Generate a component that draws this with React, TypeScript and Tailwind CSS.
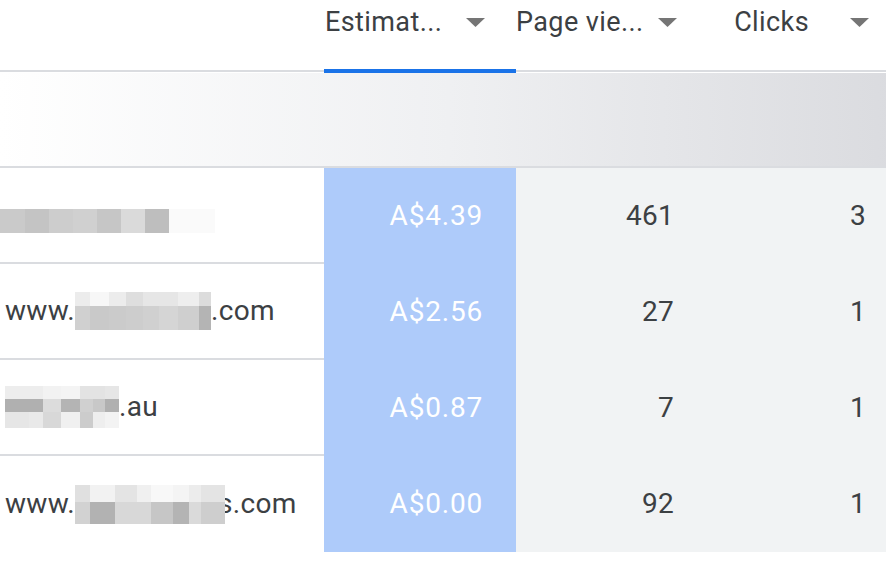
import React from "react";

type Cell = { w: string; c: string };
type Mosaic = { rows: { h: string; cells: Cell[] }[]; cls?: string };

const m1: Mosaic = {
  cls: "mt-[11px]",
  rows: [
    {
      h: "h-[24px]",
      cells: [
        { w: "w-[25px]", c: "bg-[#cacaca]" },
        { w: "w-[24px]", c: "bg-[#c4c4c4]" },
        { w: "w-[24px]", c: "bg-[#cdcdcd]" },
        { w: "w-[24px]", c: "bg-[#d0d0d0]" },
        { w: "w-[24px]", c: "bg-[#c6c6c6]" },
        { w: "w-[24px]", c: "bg-[#dadada]" },
        { w: "w-[24px]", c: "bg-[#bebebe]" },
        { w: "w-[46px]", c: "bg-[#fafafa]" },
      ],
    },
  ],
};

const m2: Mosaic = {
  rows: [
    {
      h: "h-[14px]",
      cells: [
        { w: "w-[15px]", c: "bg-[#ececec]" },
        { w: "w-[19px]", c: "bg-[#f7f7f7]" },
        { w: "w-[17px]", c: "bg-[#ececec]" },
        { w: "w-[17px]", c: "bg-[#dedede]" },
        { w: "w-[16px]", c: "bg-[#e6e6e6]" },
        { w: "w-[19px]", c: "bg-[#e6e6e6]" },
        { w: "w-[21px]", c: "bg-[#eeeeee]" },
        { w: "w-[12px]", c: "bg-[#dcdcdc]" },
      ],
    },
    {
      h: "h-[24px]",
      cells: [
        { w: "w-[15px]", c: "bg-[#d0d0d0]" },
        { w: "w-[19px]", c: "bg-[#c9c9c9]" },
        { w: "w-[17px]", c: "bg-[#cbcbcb]" },
        { w: "w-[17px]", c: "bg-[#cdcdcd]" },
        { w: "w-[16px]", c: "bg-[#d0d0d0]" },
        { w: "w-[19px]", c: "bg-[#d5d5d5]" },
        { w: "w-[21px]", c: "bg-[#cfcfcf]" },
        { w: "w-[12px]", c: "bg-[#b4b4b4]" },
      ],
    },
  ],
};

const m3: Mosaic = {
  rows: [
    {
      h: "h-[13px]",
      cells: [
        { w: "w-[24px]", c: "bg-[#ededed]" },
        { w: "w-[14px]", c: "bg-[#ededed]" },
        { w: "w-[18px]", c: "bg-[#f2f2f2]" },
        { w: "w-[19px]", c: "bg-[#f4f4f4]" },
        { w: "w-[13px]", c: "bg-[#e3e3e3]" },
        { w: "w-[12px]", c: "bg-[#e3e3e3]" },
        { w: "w-[14px]", c: "bg-[#e6e6e6]" },
      ],
    },
    {
      h: "h-[13px]",
      cells: [
        { w: "w-[24px]", c: "bg-[#b0b0b0]" },
        { w: "w-[14px]", c: "bg-[#b0b0b0]" },
        { w: "w-[18px]", c: "bg-[#dcdcdc]" },
        { w: "w-[19px]", c: "bg-[#b4b4b4]" },
        { w: "w-[13px]", c: "bg-[#d0d0d0]" },
        { w: "w-[12px]", c: "bg-[#c8c8c8]" },
        { w: "w-[14px]", c: "bg-[#b0b0b0]" },
      ],
    },
    {
      h: "h-[16px]",
      cells: [
        { w: "w-[24px]", c: "bg-[#e6e6e6]" },
        { w: "w-[14px]", c: "bg-[#e9e9e9]" },
        { w: "w-[18px]", c: "bg-[#d8d8d8]" },
        { w: "w-[19px]", c: "bg-[#f0f0f0]" },
        { w: "w-[13px]", c: "bg-[#cccccc]" },
        { w: "w-[12px]", c: "bg-[#eeeeee]" },
        { w: "w-[14px]", c: "bg-[#f3f3f3]" },
      ],
    },
  ],
};

const m4: Mosaic = {
  cls: "relative z-10",
  rows: [
    {
      h: "h-[17px]",
      cells: [
        { w: "w-[15px]", c: "bg-[#e0e0e0]" },
        { w: "w-[25px]", c: "bg-[#f2f2f2]" },
        { w: "w-[22px]", c: "bg-[#e4e4e4]" },
        { w: "w-[14px]", c: "bg-[#f0f0f0]" },
        { w: "w-[22px]", c: "bg-[#f8f8f8]" },
        { w: "w-[16px]", c: "bg-[#f4f4f4]" },
        { w: "w-[12px]", c: "bg-[#ececec]" },
        { w: "w-[24px]", c: "bg-[#e4e4e4]" },
      ],
    },
    {
      h: "h-[22px]",
      cells: [
        { w: "w-[15px]", c: "bg-[#d2d2d2]" },
        { w: "w-[25px]", c: "bg-[#b2b2b2]" },
        { w: "w-[22px]", c: "bg-[#d8d8d8]" },
        { w: "w-[14px]", c: "bg-[#d8d8d8]" },
        { w: "w-[22px]", c: "bg-[#c6c6c6]" },
        { w: "w-[16px]", c: "bg-[#b4b4b4]" },
        { w: "w-[12px]", c: "bg-[#dadada]" },
        { w: "w-[24px]", c: "bg-[#cecece]" },
      ],
    },
  ],
};

function MosaicBlock({ m }: { m: Mosaic }) {
  return (
    <span className={`inline-flex flex-col shrink-0 ${m.cls ?? ""}`}>
      {m.rows.map((r, i) => (
        <span key={i} className={`flex ${r.h}`}>
          {r.cells.map((c, j) => (
            <span key={j} className={`block h-full ${c.w} ${c.c}`} />
          ))}
        </span>
      ))}
    </span>
  );
}

function Caret() {
  return (
    <svg width="19" height="9" viewBox="0 0 19 9" className="shrink-0 block">
      <polygon points="0,0 19,0 9.5,9" fill="#757575" />
    </svg>
  );
}

const rows = [
  {
    site: <MosaicBlock m={m1} />,
    pad: "pl-0",
    est: "A$4.39",
    pv: "461",
    clicks: "3",
  },
  {
    site: (
      <>
        <span>www.</span>
        <MosaicBlock m={m2} />
        <span>.com</span>
      </>
    ),
    pad: "pl-[5px]",
    est: "A$2.56",
    pv: "27",
    clicks: "1",
  },
  {
    site: (
      <>
        <MosaicBlock m={m3} />
        <span>.au</span>
      </>
    ),
    pad: "pl-[5px]",
    est: "A$0.87",
    pv: "7",
    clicks: "1",
  },
  {
    site: (
      <>
        <span>www.</span>
        <MosaicBlock m={m4} />
        <span className="-ml-[7px]">s.com</span>
      </>
    ),
    pad: "pl-[5px]",
    est: "A$0.00",
    pv: "92",
    clicks: "1",
  },
];

export default function App() {
  return (
    <div
      className="w-[886px] h-[564px] overflow-hidden bg-white text-[#3c4043] leading-none"
      style={{ fontFamily: "Roboto, 'Liberation Sans', sans-serif" }}
    >
      <div className="w-[900px]">
        {/* Header */}
        <div className="grid grid-cols-[324px_192px_192px_192px] h-[70px] text-[27px] tracking-[0.4px]">
          <div />
          <div className="flex items-start pt-[9px] pl-[1px]">
            <span className="w-[141px] whitespace-nowrap">Estimat...</span>
            <span className="mt-[9px]">
              <Caret />
            </span>
          </div>
          <div className="flex items-start pt-[9px]">
            <span className="w-[142px] whitespace-nowrap">Page vie...</span>
            <span className="mt-[9px]">
              <Caret />
            </span>
          </div>
          <div className="flex items-start pt-[9px]">
            <span className="w-[142px] whitespace-nowrap text-right pr-[41px]">Clicks</span>
            <span className="mt-[9px]">
              <Caret />
            </span>
          </div>
        </div>
        {/* Header bottom border + blue indicator */}
        <div className="grid grid-cols-[324px_192px_384px] h-[3px]">
          <div className="bg-[#dadce0] h-[2px]" />
          <div className="bg-[#1a73e8] h-[4px] -mt-[1px]" />
          <div className="bg-[#dadce0] h-[2px]" />
        </div>
        {/* Gradient band */}
        <div className="h-[93px] bg-linear-to-r from-white via-[#eff0f2] to-[#dadbdf]" />
        <div className="h-[2px] bg-[#dadce0]" />
        {/* Rows */}
        {rows.map((r, i) => (
          <div
            key={i}
            className="grid grid-cols-[324px_192px_192px_192px] h-[96px] text-[28px] tracking-[0.3px]"
          >
            <div
              className={`flex items-center ${r.pad} ${
                i < rows.length - 1 ? "border-b-2 border-[#dadce0]" : ""
              }`}
            >
              {r.site}
            </div>
            <div className="flex items-center justify-end pr-[33px] bg-[#aecbfa] text-white tracking-[0.8px]">
              {r.est}
            </div>
            <div className="flex items-center justify-end pr-[34px] bg-[#f1f3f4]">{r.pv}</div>
            <div className="flex items-center justify-end pr-[34px] bg-[#f1f3f4]">{r.clicks}</div>
          </div>
        ))}
      </div>
    </div>
  );
}
